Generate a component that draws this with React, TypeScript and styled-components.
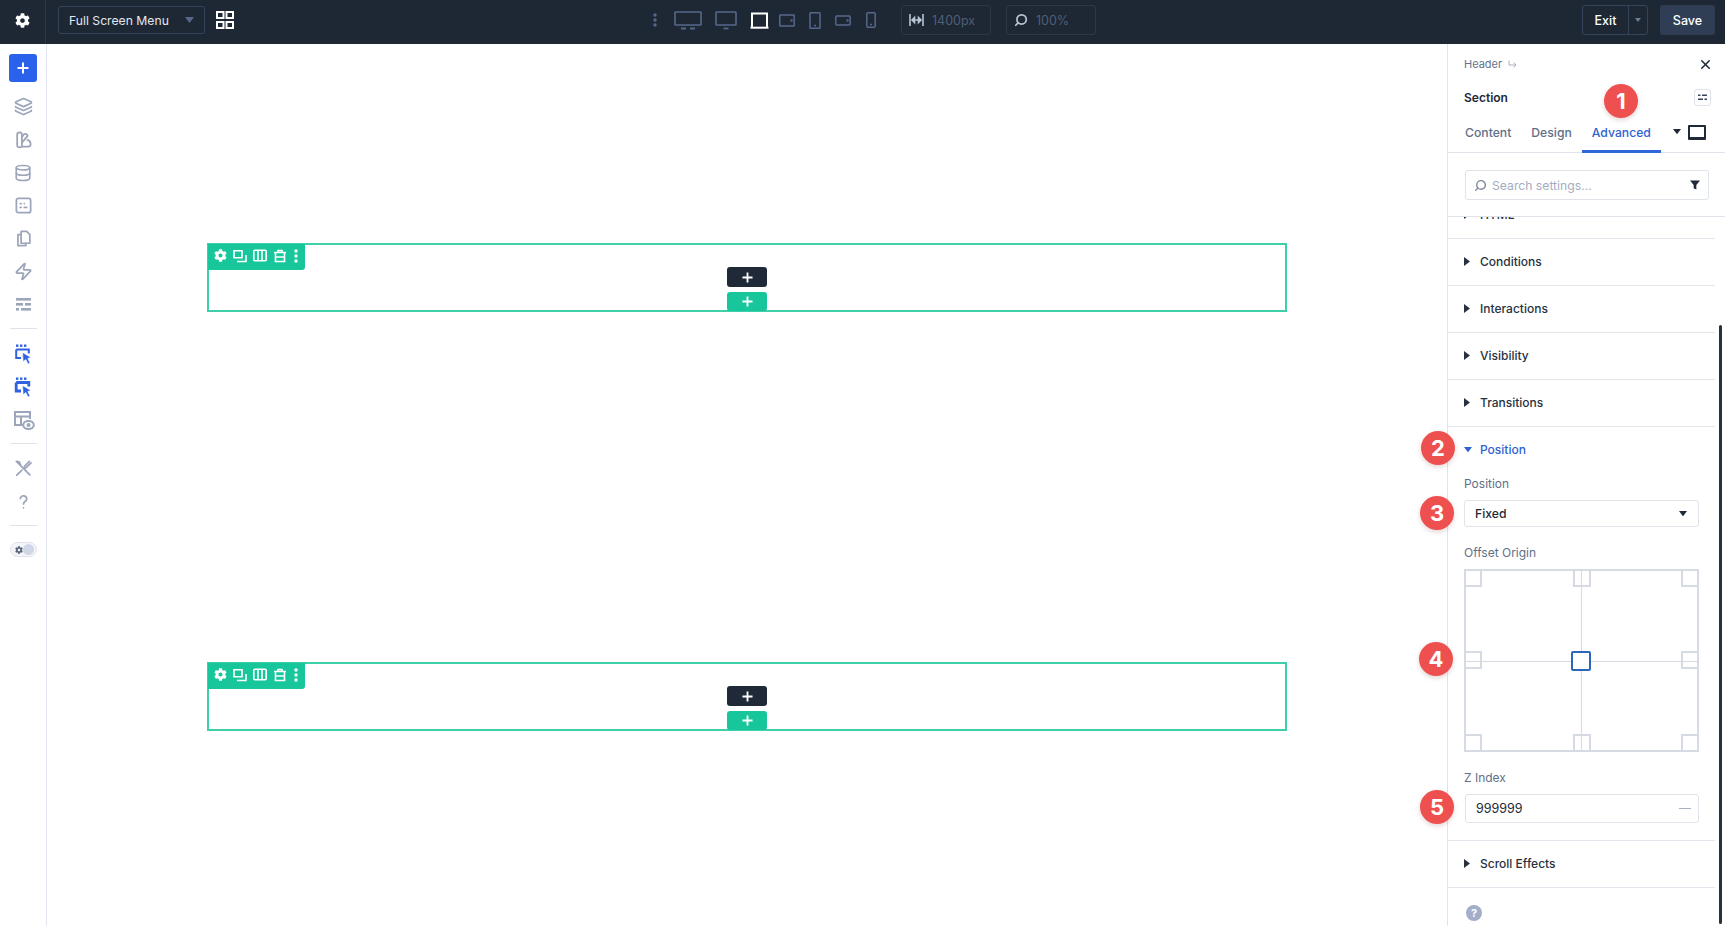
import React from 'react'
import styled, { createGlobalStyle } from 'styled-components'
import { FaCog } from 'react-icons/fa'
import { Database, Layers, Search, X, Zap } from 'lucide-react'

const GlobalStyle = createGlobalStyle`
  html, body {
    margin: 0;
    height: 100%;
    overflow: hidden;
    background: #fff;
    font-family: Inter, "Noto Sans", "Liberation Sans", sans-serif;
    color: #1f2937;
  }
  #root {
    height: 100%;
  }
  * {
    box-sizing: border-box;
  }
`

const Page = styled.div`
  display: flex;
  flex-direction: column;
  height: 926px;
  width: 1725px;
`

/* ---------- top bar ---------- */

const TopBar = styled.header`
  display: flex;
  align-items: center;
  height: 44px;
  flex: none;
  padding-bottom: 4px;
  background: #1e2734;
  color: #fff;
`

const TopLeft = styled.div`
  display: flex;
  align-items: center;
  width: 663px;
  height: 100%;
`

const GearCell = styled.div`
  display: flex;
  align-items: center;
  justify-content: center;
  width: 46px;
  height: 44px;
  margin-bottom: -4px;
  padding-bottom: 4px;
  border-right: 1px solid #2c3746;
  margin-right: 12px;
`

const TemplateSelect = styled.div`
  display: flex;
  align-items: center;
  justify-content: space-between;
  width: 147px;
  height: 28px;
  padding: 0 10px;
  border: 1px solid #36445a;
  border-radius: 3px;
  font-size: 12.2px;
  color: #e4e8ef;
`

const GridButton = styled.div`
  display: flex;
  margin-left: 11px;
`

const DeviceBar = styled.div`
  display: flex;
  align-items: center;
  height: 100%;
`

const Device = styled.div<{ $left: number; $active?: boolean }>`
  display: flex;
  margin-left: ${(p) => p.$left}px;
  color: ${(p) => (p.$active ? '#fff' : '#55688a')};
`

const ReadoutBox = styled.div<{ $left: number }>`
  display: flex;
  align-items: center;
  gap: 8px;
  width: 90px;
  height: 30px;
  margin-left: ${(p) => p.$left}px;
  padding-left: 7px;
  border: 1px solid #2d394b;
  border-radius: 3px;
  font-size: 12.5px;
  color: #4f5f79;
  > svg {
    color: #b9c4d4;
  }
`

const TopRight = styled.div`
  display: flex;
  align-items: center;
  gap: 12px;
  margin-left: auto;
  margin-right: 10px;
`

const ExitGroup = styled.div`
  display: flex;
  height: 30px;
  border: 1px solid #36445a;
  border-radius: 3px;
`

const ExitLabel = styled.div`
  display: flex;
  align-items: center;
  justify-content: center;
  width: 46px;
  font-size: 12.5px;
  font-weight: 500;
  border-right: 1px solid #36445a;
`

const ExitCaret = styled.div`
  display: flex;
  align-items: center;
  justify-content: center;
  width: 18px;
  color: #6c7c95;
`

const SaveButton = styled.div`
  display: flex;
  align-items: center;
  justify-content: center;
  width: 55px;
  height: 30px;
  border-radius: 3px;
  background: #2f3e54;
  font-size: 12.5px;
  font-weight: 500;
`

/* ---------- main layout ---------- */

const Body = styled.div`
  display: flex;
  flex: 1;
  min-height: 0;
`

const Sidebar = styled.nav`
  display: flex;
  flex-direction: column;
  align-items: center;
  flex: none;
  width: 47px;
  padding-top: 10px;
  border-right: 1px solid #e1e5ee;
  color: #9ca5ba;
`

const AddButton = styled.div`
  display: flex;
  align-items: center;
  justify-content: center;
  width: 28px;
  height: 28px;
  margin-bottom: 8px;
  border-radius: 3px;
  background: #2a62ec;
  color: #fff;
`

const Slot = styled.div<{ $active?: boolean; $top?: number }>`
  display: flex;
  align-items: center;
  justify-content: center;
  height: 33px;
  margin-top: ${(p) => p.$top ?? 0}px;
  color: ${(p) => (p.$active ? '#2f62e0' : 'inherit')};
`

const SideRule = styled.hr<{ $top: number; $bottom: number }>`
  width: 27px;
  height: 1px;
  border: 0;
  background: #dfe2e9;
  margin: ${(p) => p.$top}px 0 ${(p) => p.$bottom}px;
`

const ModeToggle = styled.div`
  display: flex;
  align-items: center;
  justify-content: space-between;
  width: 27px;
  height: 15px;
  padding: 0 2px 0 4px;
  border: 1px solid #dfe2e9;
  border-radius: 8px;
  background: #f4f5f8;
  color: #5a6478;
`

const ToggleKnob = styled.span`
  width: 11px;
  height: 11px;
  border-radius: 50%;
  background: #cfd6e6;
`

const Canvas = styled.main`
  display: flex;
  flex-direction: column;
  gap: 350px;
  flex: 1;
  padding: 199px 0 0 160px;
`

const SectionBlock = styled.section`
  position: relative;
  display: flex;
  flex-direction: column;
  align-items: center;
  gap: 5px;
  width: 1080px;
  height: 69px;
  padding-top: 22px;
  border: 2px solid #3fd0aa;
`

const SectionTools = styled.div`
  position: absolute;
  top: -1px;
  left: -1px;
  display: flex;
  align-items: center;
  width: 97px;
  height: 26px;
  padding: 0 6px 3px 6px;
  gap: 6px;
  border-radius: 0 0 3px 0;
  background: #17c79b;
  color: #fff;
  > svg:last-child {
    margin-left: 1px;
  }
`

const PlusButton = styled.div<{ $tone: 'dark' | 'green' }>`
  display: flex;
  align-items: center;
  justify-content: center;
  flex: none;
  width: 40px;
  height: ${(p) => (p.$tone === 'dark' ? 20 : 19)}px;
  border-radius: 3px;
  background: ${(p) => (p.$tone === 'dark' ? '#1f2937' : '#17c79b')};
  color: #fff;
`

/* ---------- settings panel ---------- */

const Panel = styled.aside`
  position: relative;
  display: flex;
  flex-direction: column;
  flex: none;
  width: 278px;
  border-left: 1px solid #dfe3ea;
`

const Crumb = styled.div`
  display: flex;
  align-items: center;
  justify-content: space-between;
  height: 16px;
  margin-top: 12px;
  padding: 0 12px 0 16px;
  font-size: 11px;
  color: #66748c;
`

const CrumbText = styled.span`
  display: flex;
  align-items: center;
  gap: 6px;
`

const PanelTitle = styled.div`
  display: flex;
  align-items: center;
  justify-content: space-between;
  height: 20px;
  margin-top: 15px;
  padding: 0 14px 0 16px;
  font-size: 12px;
  font-weight: 600;
`

const OptionBox = styled.span`
  display: flex;
  align-items: center;
  justify-content: center;
  width: 17px;
  height: 17px;
  border: 1px solid #dfe3ea;
  border-radius: 3px;
  color: #38445a;
`

const Tabs = styled.div`
  display: flex;
  align-items: stretch;
  height: 33px;
  margin-top: 13px;
  padding-left: 7px;
  border-bottom: 1px solid #dfe3ea;
`

const Tab = styled.div<{ $active?: boolean }>`
  display: flex;
  align-items: center;
  height: 33px;
  padding: 0 10px 6px;
  font-size: 12.2px;
  font-weight: 500;
  color: ${(p) => (p.$active ? '#2f62d0' : '#5f6f88')};
  border-bottom: 3px solid ${(p) => (p.$active ? '#2f66d9' : 'transparent')};
`

const TabExtras = styled.div`
  display: flex;
  align-items: center;
  gap: 7px;
  margin-left: 12px;
  padding-bottom: 8px;
`

const ViewBox = styled.span`
  width: 18px;
  height: 15px;
  border: 2px solid #1f2937;
  border-bottom-width: 3px;
  border-radius: 1px;
`

const SearchWrap = styled.div`
  padding: 17px 16px 16px 17px;
  border-bottom: 1px solid #dfe3ea;
`

const SearchField = styled.div`
  display: flex;
  align-items: center;
  height: 30px;
  padding: 0 8px 0 8px;
  border: 1px solid #dfe3ea;
  border-radius: 3px;
  font-size: 12.2px;
  color: #a3adbf;
  > svg:first-child {
    transform: scaleX(-1);
    margin-right: 5px;
    color: #7d889c;
  }
  > svg:last-child {
    margin-left: auto;
    color: #1f2937;
  }
`

const SettingsList = styled.div`
  flex: 1;
  padding-right: 10px;
`

const RowFrame = styled.div<{ $height?: number }>`
  position: relative;
  height: ${(p) => p.$height ?? 47}px;
  border-bottom: 1px solid #e3e6ec;
  overflow: ${(p) => (p.$height ? 'hidden' : 'visible')};
`

const RowHead = styled.div<{ $open?: boolean; $height?: number; $shift?: number }>`
  display: flex;
  align-items: center;
  gap: ${(p) => (p.$open ? 8 : 10)}px;
  height: ${(p) => p.$height ?? 44}px;
  margin-top: ${(p) => p.$shift ?? 0}px;
  padding-left: ${(p) => (p.$open ? 0 : 16)}px;
  font-size: 12px;
  font-weight: 550;
  color: ${(p) => (p.$open ? '#2f62d0' : '#28323f')};
`

const PositionBlock = styled.div`
  position: relative;
  display: flex;
  flex-direction: column;
  padding: 0 0 17px 16px;
  border-bottom: 1px solid #e3e6ec;
`

const FieldLabel = styled.div<{ $top: number }>`
  height: 16px;
  line-height: 16px;
  margin-top: ${(p) => p.$top}px;
  margin-bottom: 8px;
  font-size: 12px;
  color: #5f6f88;
`

const SelectBox = styled.div`
  position: relative;
  display: flex;
  align-items: center;
  justify-content: space-between;
  width: 235px;
  height: 27px;
  padding: 0 11px 0 10px;
  border: 1px solid #dfe3ea;
  border-radius: 3px;
  font-size: 12.2px;
  font-weight: 500;
`

const NumberBox = styled(SelectBox)`
  width: 234px;
  height: 29px;
  margin-left: 1px;
  padding-right: 7px;
  font-size: 12.5px;
  font-weight: 400;
`

const DashMark = styled.span`
  width: 12px;
  height: 1px;
  background: #aab2c0;
`

const OriginGrid = styled.div`
  position: relative;
  display: grid;
  grid-template-columns: 1fr 1fr 1fr;
  grid-template-rows: 1fr 1fr 1fr;
  width: 235px;
  height: 183px;
  border: 2px solid #d6dae2;
  &::before {
    content: '';
    position: absolute;
    top: 0;
    bottom: 0;
    left: calc(50% - 1px);
    width: 1px;
    background: #d6dae2;
  }
  &::after {
    content: '';
    position: absolute;
    left: 0;
    right: 0;
    top: 50%;
    height: 1px;
    background: #d6dae2;
  }
`

const OriginCell = styled.span<{ $x: string; $y: string; $active?: boolean }>`
  position: relative;
  z-index: 1;
  justify-self: ${(p) => p.$x};
  align-self: ${(p) => p.$y};
  width: ${(p) => (p.$active ? 20 : 18)}px;
  height: ${(p) => (p.$active ? 20 : 18)}px;
  margin: ${(p) => (p.$active ? '1px 2px 0 0' : '-2px')};
  border: 2px solid ${(p) => (p.$active ? '#2f66b9' : '#d6dae2')};
  border-radius: ${(p) => (p.$active ? '2px' : '0')};
  background: ${(p) => (p.$active ? '#fff' : 'transparent')};
`

const Marker = styled.span<{ $left: number; $top: number }>`
  position: absolute;
  z-index: 3;
  left: ${(p) => p.$left}px;
  top: ${(p) => p.$top}px;
  display: flex;
  align-items: center;
  justify-content: center;
  width: 34px;
  height: 34px;
  border-radius: 50%;
  background: #ee5050;
  color: #fff;
  font-family: Inter, "Liberation Sans", sans-serif;
  font-size: 22px;
  font-weight: 700;
  box-shadow: 0 2px 5px rgba(120, 40, 40, 0.2);
`

const HelpSpot = styled.div`
  display: flex;
  padding: 17px 0 0 18px;
`

const HelpDot = styled.span`
  display: flex;
  align-items: center;
  justify-content: center;
  width: 16px;
  height: 16px;
  border-radius: 50%;
  background: #a3aec8;
  color: #fff;
  font-size: 11px;
  font-weight: 700;
`

const ScrollThumb = styled.div`
  position: absolute;
  top: 281px;
  bottom: 2px;
  right: 3px;
  width: 3px;
  border-radius: 2px;
  background: #28323f;
`

/* ---------- drawn icons ---------- */

const Line = ({ size = 19, children }: { size?: number; children: React.ReactNode }) => (
  <svg width={size} height={size} viewBox="0 0 24 24" fill="none" stroke="currentColor" strokeWidth="2.2" strokeLinecap="round" strokeLinejoin="round">
    {children}
  </svg>
)

const Plus = ({ size = 11 }: { size?: number }) => (
  <svg width={size} height={size} viewBox="0 0 12 12" fill="none" stroke="currentColor" strokeWidth="2">
    <path d="M6 0.5v11M0.5 6h11" />
  </svg>
)

const Caret = ({ dir = 'down', color = 'currentColor', w = 9 }: { dir?: 'down' | 'right'; color?: string; w?: number }) =>
  dir === 'down' ? (
    <svg width={w} height={w * 0.67} viewBox="0 0 9 6" fill={color}>
      <path d="M0 0h9L4.5 6z" />
    </svg>
  ) : (
    <svg width={6} height={9} viewBox="0 0 6 9" fill={color}>
      <path d="M0 0v9l6-4.5z" />
    </svg>
  )

const GridIcon = () => (
  <svg width="18" height="18" viewBox="0 0 18 18" fill="none" stroke="currentColor" strokeWidth="2">
    <rect x="1" y="1" width="6.5" height="6" />
    <rect x="10.5" y="1" width="6.5" height="6" />
    <rect x="1" y="11" width="6.5" height="6" />
    <rect x="10.5" y="11" width="6.5" height="6" />
  </svg>
)

const VDots = ({ h = 14 }: { h?: number }) => (
  <svg width="4" height={h} viewBox="0 0 4 14" fill="currentColor">
    <circle cx="2" cy="2" r="1.7" />
    <circle cx="2" cy="7" r="1.7" />
    <circle cx="2" cy="12" r="1.7" />
  </svg>
)

const WideDesktop = () => (
  <svg width="28" height="19" viewBox="0 0 28 19" fill="none" stroke="currentColor" strokeWidth="1.6">
    <rect x="1" y="1" width="26" height="13" rx="0.5" />
    <path d="M7 17.5h5M16 17.5h5" strokeWidth="1.8" />
  </svg>
)

const Desktop = () => (
  <svg width="22" height="19" viewBox="0 0 22 19" fill="none" stroke="currentColor" strokeWidth="1.6">
    <rect x="1" y="1" width="20" height="13" rx="0.5" />
    <path d="M8.5 17.5h5" strokeWidth="1.8" />
  </svg>
)

const Laptop = () => (
  <svg width="19" height="17" viewBox="0 0 19 17" fill="none" stroke="currentColor" strokeWidth="2">
    <path d="M2 15V1.5h15V15" />
    <path d="M0.5 15.7h18" />
  </svg>
)

const TabletWide = () => (
  <svg width="16" height="13" viewBox="0 0 16 13" fill="none" stroke="currentColor" strokeWidth="1.5">
    <rect x="0.8" y="1" width="14.4" height="11" rx="0.5" />
    <circle cx="12.5" cy="6.5" r="0.5" />
  </svg>
)

const TabletTall = () => (
  <svg width="12" height="17" viewBox="0 0 12 17" fill="none" stroke="currentColor" strokeWidth="1.5">
    <rect x="1" y="0.8" width="10" height="15.4" rx="0.5" />
    <path d="M5 13.5h2" />
  </svg>
)

const PhoneWide = () => (
  <svg width="16" height="11" viewBox="0 0 16 11" fill="none" stroke="currentColor" strokeWidth="1.5">
    <rect x="0.8" y="1" width="14.4" height="9" rx="1" />
    <circle cx="12.5" cy="5.5" r="0.5" />
  </svg>
)

const PhoneTall = () => (
  <svg width="10" height="16" viewBox="0 0 10 16" fill="none" stroke="currentColor" strokeWidth="1.5">
    <rect x="0.8" y="0.8" width="8.4" height="14.4" rx="1" />
    <path d="M4 12.5h2" />
  </svg>
)

const WidthIcon = () => (
  <svg width="15" height="14" viewBox="0 0 15 14" fill="none" stroke="currentColor" strokeWidth="1.6">
    <path d="M1 1v12M14 1v12M3 7h9" />
    <path d="M3 7l2.5-2.5v5zM12 7L9.5 4.5v5z" fill="currentColor" />
  </svg>
)

const Swatches = () => (
  <Line>
    <path d="M4 6a3 3 0 0 1 6 0v13a3 3 0 0 1-6 0z" />
    <path d="M10 9l2.5-3.5a2.6 2.6 0 0 1 4 .5l.8 1.5L10 16" />
    <path d="M10 21h8a3 3 0 0 0 3-3c0-3-2-5-4-5.5" />
  </Line>
)

const FieldsBox = () => (
  <Line>
    <rect x="3" y="3" width="18" height="18" rx="2.5" />
    <path d="M8 9.5h1M8 14.5h1M13 14.5h3M13 9.5h0" />
  </Line>
)

const Pages = () => (
  <Line>
    <path d="M9 3h7l4 4v11H9z" />
    <path d="M9 7H5v14h10v-3" />
  </Line>
)

const RowLines = () => (
  <svg width="17" height="15" viewBox="0 0 17 15" fill="currentColor">
    <rect x="1" y="1" width="15" height="2.6" />
    <rect x="1" y="6" width="7" height="2.6" />
    <rect x="10" y="6" width="6" height="2.6" />
    <rect x="1" y="11" width="3" height="2.6" />
    <rect x="6" y="11" width="10" height="2.6" />
  </svg>
)

const DottedCursor = ({ thick }: { thick?: boolean }) => (
  <svg width="20" height="21" viewBox="-2 0 20 21">
    <g fill="currentColor">
      <rect x="1" y="0.5" width="2.4" height="2.4" />
      <rect x="5" y="0.5" width="2.4" height="2.4" />
      <rect x="9" y="0.5" width="2.4" height="2.4" />
    </g>
    <path d="M1.2 5.5h12.6v4M6 14H1.2V5.5" fill="none" stroke="currentColor" strokeWidth={thick ? 2.8 : 2} />
    <path d="M7.5 8.5l8.5 5-3.2 1 2.2 4.5-2 1-2.2-4.5-2.6 2.2z" fill="currentColor" stroke="#fff" strokeWidth="0.6" />
  </svg>
)

const LayoutEye = () => (
  <svg width="24" height="21" viewBox="-2 0 24 21" fill="none" stroke="currentColor" strokeWidth="2">
    <path d="M10 15H2V2h15v7" />
    <path d="M2 6.5h15M8 6.5V15" />
    <ellipse cx="15.5" cy="15" rx="5.3" ry="4" fill="#fff" />
    <circle cx="15.5" cy="15" r="1" fill="currentColor" />
  </svg>
)

const ToolsIcon = () => (
  <Line>
    <path d="M4 4l16 16" />
    <path d="M19.5 3l-6 6-1 3 3-1 6-6" />
    <path d="M10 14l-6.5 6.5" />
    <path d="M3 3l4 1 1 3" />
  </Line>
)

const QuestionIcon = () => (
  <Line>
    <path d="M8 8.5a4 4 0 0 1 8 .5c0 2.5-4 3-4 6" />
    <path d="M12 20h0" />
  </Line>
)

const DuplicateIcon = () => (
  <svg width="14" height="14" viewBox="0 0 14 14" fill="none" stroke="currentColor" strokeWidth="1.6">
    <path d="M1 1.8h8v7H1z" />
    <path d="M4 12.5h9V6" />
  </svg>
)

const ColumnsIcon = () => (
  <svg width="14" height="13" viewBox="0 0 14 13" fill="none" stroke="currentColor" strokeWidth="1.6">
    <rect x="0.8" y="1.3" width="12.4" height="10.4" rx="1" />
    <path d="M5 1.3v10.4M9 1.3v10.4" />
  </svg>
)

const TrashIcon = () => (
  <svg width="14" height="14" viewBox="0 0 14 14" fill="none" stroke="currentColor" strokeWidth="1.6">
    <path d="M1 3.5h12M5 3.5V1.5h4v2" />
    <path d="M2.5 3.5v9h9v-9M2.5 8h9" />
  </svg>
)

const FunnelIcon = () => (
  <svg width="10" height="10" viewBox="0 0 12 12" fill="currentColor">
    <path d="M0 0.5h12L7.6 6v5.5L4.4 10V6z" />
  </svg>
)

const ReturnArrow = () => (
  <svg width="9" height="9" viewBox="0 0 9 9" fill="none" stroke="#a9b2c3" strokeWidth="1">
    <path d="M1 0.5v4.5h7M5.5 2.5L8 5 5.5 7.5" />
  </svg>
)

const OptionsGlyph = () => (
  <svg width="9" height="7" viewBox="0 0 9 7" fill="currentColor">
    <rect x="0" y="0.5" width="2.5" height="1.5" />
    <rect x="4" y="0.5" width="5" height="1.5" />
    <rect x="0" y="4.5" width="5" height="1.5" />
    <rect x="6.5" y="4.5" width="2.5" height="1.5" />
  </svg>
)

/* ---------- data ---------- */

const origins: { x: string; y: string; active?: boolean }[] = [
  { x: 'start', y: 'start' },
  { x: 'center', y: 'start' },
  { x: 'end', y: 'start' },
  { x: 'start', y: 'center' },
  { x: 'center', y: 'center', active: true },
  { x: 'end', y: 'center' },
  { x: 'start', y: 'end' },
  { x: 'center', y: 'end' },
  { x: 'end', y: 'end' },
]

const EmptySection = () => (
  <SectionBlock>
    <SectionTools>
      <FaCog size={13} />
      <DuplicateIcon />
      <ColumnsIcon />
      <TrashIcon />
      <VDots />
    </SectionTools>
    <PlusButton $tone="dark">
      <Plus />
    </PlusButton>
    <PlusButton $tone="green">
      <Plus />
    </PlusButton>
  </SectionBlock>
)

const ClosedRow = ({ label }: { label: string }) => (
  <RowFrame>
    <RowHead>
      <Caret dir="right" />
      {label}
    </RowHead>
  </RowFrame>
)

export default function App() {
  return (
    <Page>
      <GlobalStyle />
      <TopBar>
        <TopLeft>
          <GearCell>
            <FaCog size={15} />
          </GearCell>
          <TemplateSelect>
            Full Screen Menu
            <Caret color="#56688a" />
          </TemplateSelect>
          <GridButton>
            <GridIcon />
          </GridButton>
        </TopLeft>
        <DeviceBar>
          <Device $left={-10}>
            <VDots />
          </Device>
          <Device $left={17}>
            <WideDesktop />
          </Device>
          <Device $left={13}>
            <Desktop />
          </Device>
          <Device $left={13} $active>
            <Laptop />
          </Device>
          <Device $left={10}>
            <TabletWide />
          </Device>
          <Device $left={14}>
            <TabletTall />
          </Device>
          <Device $left={14}>
            <PhoneWide />
          </Device>
          <Device $left={15}>
            <PhoneTall />
          </Device>
          <ReadoutBox $left={25}>
            <WidthIcon />
            1400px
          </ReadoutBox>
          <ReadoutBox $left={15}>
            <Search size={14} strokeWidth={3} style={{ transform: 'scaleX(-1)' }} />
            100%
          </ReadoutBox>
        </DeviceBar>
        <TopRight>
          <ExitGroup>
            <ExitLabel>Exit</ExitLabel>
            <ExitCaret>
              <Caret w={6} />
            </ExitCaret>
          </ExitGroup>
          <SaveButton>Save</SaveButton>
        </TopRight>
      </TopBar>

      <Body>
        <Sidebar>
          <AddButton>
            <Plus size={12} />
          </AddButton>
          <Slot>
            <Layers size={19} strokeWidth={2.2} />
          </Slot>
          <Slot>
            <Swatches />
          </Slot>
          <Slot>
            <Database size={18} strokeWidth={2.2} />
          </Slot>
          <Slot>
            <FieldsBox />
          </Slot>
          <Slot>
            <Pages />
          </Slot>
          <Slot>
            <Zap size={19} strokeWidth={2.2} />
          </Slot>
          <Slot>
            <RowLines />
          </Slot>
          <SideRule $top={7} $bottom={9} />
          <Slot $active>
            <DottedCursor />
          </Slot>
          <Slot $active>
            <DottedCursor thick />
          </Slot>
          <Slot>
            <LayoutEye />
          </Slot>
          <SideRule $top={6} $bottom={8} />
          <Slot>
            <ToolsIcon />
          </Slot>
          <Slot>
            <QuestionIcon />
          </Slot>
          <SideRule $top={7} $bottom={16} />
          <ModeToggle>
            <FaCog size={8} />
            <ToggleKnob />
          </ModeToggle>
        </Sidebar>

        <Canvas>
          <EmptySection />
          <EmptySection />
        </Canvas>

        <Panel>
          <Crumb>
            <CrumbText>
              Header <ReturnArrow />
            </CrumbText>
            <X size={15} strokeWidth={2.4} color="#1f2937" />
          </Crumb>
          <PanelTitle>
            Section
            <OptionBox>
              <OptionsGlyph />
            </OptionBox>
          </PanelTitle>
          <Marker $left={156} $top={40}>1</Marker>
          <Tabs>
            <Tab>Content</Tab>
            <Tab>Design</Tab>
            <Tab $active>Advanced</Tab>
            <TabExtras>
              <Caret w={8} color="#1f2937" />
              <ViewBox />
            </TabExtras>
          </Tabs>
          <SearchWrap>
            <SearchField>
              <Search size={13} strokeWidth={2.6} />
              Search settings...
              <FunnelIcon />
            </SearchField>
          </SearchWrap>
          <SettingsList>
            <RowFrame $height={22}>
              <RowHead $shift={-25}>
                <Caret dir="right" />
                HTML
              </RowHead>
            </RowFrame>
            <ClosedRow label="Conditions" />
            <ClosedRow label="Interactions" />
            <ClosedRow label="Visibility" />
            <ClosedRow label="Transitions" />
            <PositionBlock>
              <RowHead $open $height={45}>
                <Caret w={8} color="#2f62d0" />
                Position
              </RowHead>
              <Marker $left={-27} $top={4}>2</Marker>
              <FieldLabel $top={4}>Position</FieldLabel>
              <SelectBox>
                Fixed
                <Caret w={8} color="#1f2937" />
              </SelectBox>
              <Marker $left={-28} $top={69}>3</Marker>
              <FieldLabel $top={18}>Offset Origin</FieldLabel>
              <OriginGrid>
                {origins.map((o) => (
                  <OriginCell key={`${o.x}-${o.y}`} $x={o.x} $y={o.y} $active={o.active} />
                ))}
              </OriginGrid>
              <Marker $left={-29} $top={215}>4</Marker>
              <FieldLabel $top={18}>Z Index</FieldLabel>
              <NumberBox>
                999999
                <DashMark />
              </NumberBox>
              <Marker $left={-28} $top={363}>5</Marker>
            </PositionBlock>
            <ClosedRow label="Scroll Effects" />
            <HelpSpot>
              <HelpDot>?</HelpDot>
            </HelpSpot>
          </SettingsList>
          <ScrollThumb />
        </Panel>
      </Body>
    </Page>
  )
}
